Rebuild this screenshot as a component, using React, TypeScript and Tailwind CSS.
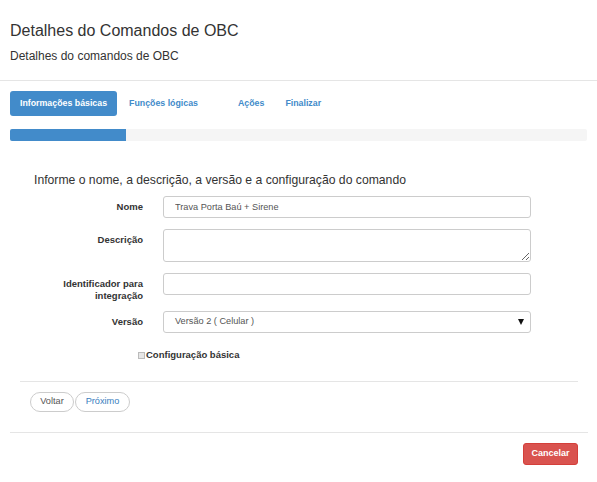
const labelCls =
  "w-[123px] shrink-0 pt-[5px] text-right text-[9.5px] font-bold leading-[12px] text-[#333]";

const fieldCls =
  "ml-[20px] w-[368px] rounded-[3px] border border-[#ccc] bg-white px-[11px] text-[9.2px] text-[#555] outline-none";

const App = () => {
  return (
    <div className="min-h-[482px] w-[597px] bg-white font-['Liberation_Sans',Arial,sans-serif] text-[#333]">
      {/* Header */}
      <div className="h-[81px] border-b border-[#e5e5e5] pl-[10px] pt-[22px]">
        <h4 className="text-[16px] leading-[18px]">Detalhes do Comandos de OBC</h4>
        <p className="mt-[9px] text-[12px] leading-[14px]">Detalhes do comandos de OBC</p>
      </div>

      <div className="pl-[10px] pr-[9px] pt-[10px]">
        {/* Steps */}
        <div className="flex h-[25px] text-[8.8px] font-bold">
          <span className="flex items-center rounded-[3px] bg-[#428bca] px-[10px] text-white">
            Informações básicas
          </span>
          <span className="ml-[2px] flex items-center px-[10px] text-[#428bca]">Funções lógicas</span>
          <span className="ml-[20px] flex items-center px-[10px] text-[#428bca]">Ações</span>
          <span className="ml-px flex items-center px-[10px] text-[#428bca]">Finalizar</span>
        </div>

        {/* Progress */}
        <div className="mt-[13px] h-[12px] w-[577px] overflow-hidden rounded-[2px] bg-[#f5f5f5]">
          <div className="h-full w-[116px] bg-[#428bca]" />
        </div>

        {/* Form panel */}
        <div className="mx-[10px] pb-[20px]">
          <p className="mt-[32px] pl-[14px] text-[12.2px] leading-[14px]">
            Informe o nome, a descrição, a versão e a configuração do comando
          </p>

          <div className="mt-[9px] flex items-start">
            <label className={labelCls}>Nome</label>
            <input readOnly value="Trava Porta Baú + Sirene" className={`${fieldCls} h-[22px]`} />
          </div>

          <div className="mt-[11px] flex items-start">
            <label className={labelCls}>Descrição</label>
            <textarea readOnly className={`${fieldCls} block h-[33px] py-[4px]`} />
          </div>

          <div className="mt-[11px] flex items-start">
            <label className={labelCls}>
              Identificador para
              <br />
              integração
            </label>
            <input readOnly className={`${fieldCls} h-[22px]`} />
          </div>

          <div className="mt-[9px] flex items-start">
            <label className={labelCls}>Versão</label>
            <div className={`${fieldCls} flex h-[22px] items-center justify-between pr-[6px]`}>
              <span>Versão 2 ( Celular )</span>
              <svg width="6" height="6" viewBox="0 0 6 6">
                <path d="M0 0h6L3 6z" fill="#111" />
              </svg>
            </div>
          </div>

          <div className="ml-[118px] mt-[16px] flex h-[12px] items-center text-[9.5px] font-bold leading-[12px]">
            <span className="mr-px h-[7px] w-[7px] border border-[#bbb] bg-[#e6e6e6]" />
            Configuração básica
          </div>

          <div className="mt-[20px] border-t border-[#e5e5e5] pl-[10px] pt-[10px]">
            <div className="flex text-[9.2px]">
              <div className="flex h-[20px] w-[44px] items-center justify-center rounded-full border border-[#ccc] bg-white text-[#555]">
                Voltar
              </div>
              <div className="ml-px flex h-[20px] w-[55px] items-center justify-center rounded-full border border-[#ccc] bg-white">
                <span className="text-[#3a80c0]">Próximo</span>
              </div>
            </div>
          </div>
        </div>

        {/* Footer */}
        <div className="flex justify-end border-t border-[#e5e5e5] p-[10px]">
          <div className="flex h-[22px] w-[55px] items-center justify-center rounded-[3px] border border-[#d43f3a] bg-[#d9534f] text-[9px] font-bold text-white">
            Cancelar
          </div>
        </div>
      </div>
    </div>
  );
};

export default App;
